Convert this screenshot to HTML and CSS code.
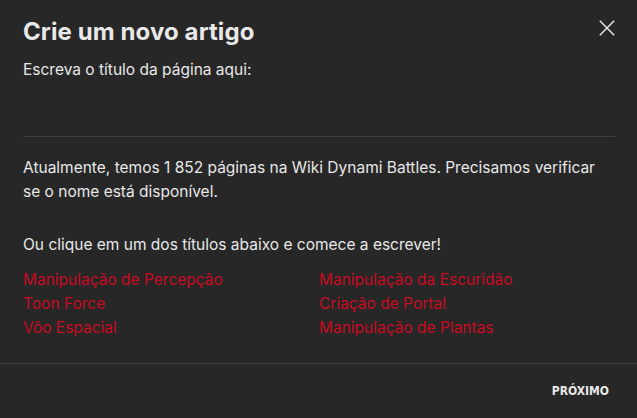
FILE: index.html
```html
<!DOCTYPE html>
<html lang="pt">
<head>
<meta charset="utf-8">
<link rel="stylesheet" href="styles.css">
</head>
<body>
<div class="modal">
  <div class="content">
    <div class="header">
      <h2 class="title">Crie um novo artigo</h2>
      <button class="close" aria-label="Fechar">
        <svg width="16" height="16" viewBox="0 0 16 16"><path d="M0.8 0.8L15.2 15.2M15.2 0.8L0.8 15.2" stroke="#e6e6e6" stroke-width="1.5" fill="none"/></svg>
      </button>
    </div>
    <label class="label">Escreva o título da página aqui:</label>
    <div class="input"></div>
    <p class="info first">Atualmente, temos 1 852 páginas na Wiki Dynami Battles. Precisamos verificar se o nome está disponível.</p>
    <p class="info second">Ou clique em um dos títulos abaixo e comece a escrever!</p>
    <ul class="links">
      <li><a href="#">Manipulação de Percepção</a></li>
      <li><a href="#">Manipulação da Escuridão</a></li>
      <li><a href="#">Toon Force</a></li>
      <li><a href="#">Criação de Portal</a></li>
      <li><a href="#">Vôo Espacial</a></li>
      <li><a href="#">Manipulação de Plantas</a></li>
    </ul>
  </div>
  <div class="footer">
    <button class="next">PRÓXIMO</button>
  </div>
</div>
</body>
</html>
```
FILE: styles.css
```css
html, body {
  margin: 0;
  padding: 0;
  background: #272727;
}
.modal {
  width: 637px;
  height: 418px;
  font-family: "Inter", "Liberation Sans", sans-serif;
  color: #e8e8e8;
  display: flex;
  flex-direction: column;
}
.content {
  padding: 16px 22px 0 23px;
  height: 363px;
  box-sizing: border-box;
}
.header {
  display: flex;
  justify-content: space-between;
  align-items: flex-start;
}
.title {
  margin: 0;
  font-size: 24px;
  font-weight: 700;
  line-height: 32px;
  letter-spacing: 0.1px;
  color: #e8e8e8;
}
.close {
  background: none;
  border: 0;
  padding: 0;
  margin: 4px 0 0 0;
  cursor: pointer;
  line-height: 0;
}
.label {
  display: block;
  font-size: 15.5px;
  line-height: 24px;
  margin-top: 10px;
}
.input {
  height: 54px;
  border-bottom: 1px solid #3d3d3d;
}
.info {
  margin: 19px 0 0;
  font-size: 15.5px;
  line-height: 24px;
}
.info.first {
  max-width: 575px;
}
.info.second {
  margin-top: 29px;
}
.links {
  list-style: none;
  margin: 11px 0 0;
  padding: 0;
  display: grid;
  grid-template-columns: 1fr 1fr;
}
.links li {
  font-size: 15.5px;
  line-height: 24px;
}
.links a {
  color: #c80a22;
  text-decoration: none;
}
.footer {
  border-top: 1px solid #3d3d3d;
  flex: 1;
  display: flex;
  justify-content: flex-end;
  align-items: center;
  padding-right: 28px;
}
.next {
  background: none;
  border: 0;
  padding: 0;
  font-family: "DejaVu Sans Condensed", "Liberation Sans Narrow", sans-serif;
  font-weight: 700;
  font-size: 12px;
  color: #e8e8e8;
  cursor: pointer;
}
```
